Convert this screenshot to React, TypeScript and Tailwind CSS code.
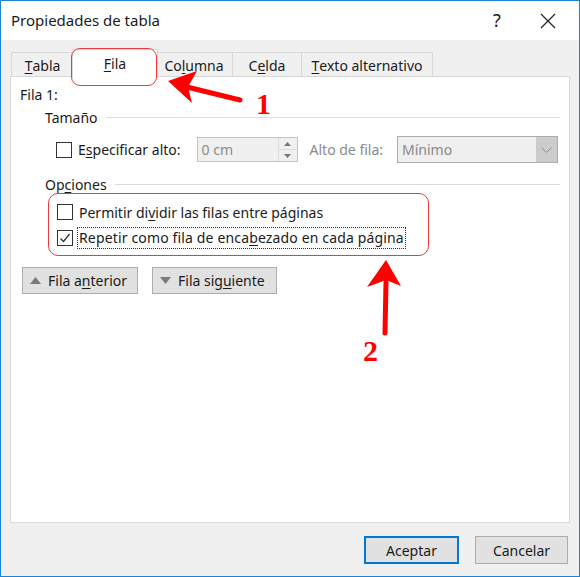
import React from 'react';

const FONT = { fontFamily: '"Noto Sans", "Open Sans", sans-serif' };

function U({ children }: { children: React.ReactNode }) {
  return <span className="underline underline-offset-2">{children}</span>;
}

function Box({ checked = false }: { checked?: boolean }) {
  return (
    <span className="w-[16px] h-[16px] border border-[#333] bg-white flex items-center justify-center shrink-0">
      {checked && (
        <svg width="12" height="12" viewBox="0 0 12 12">
          <path d="M1.5 6.5 L4.5 9.5 L10.5 2" fill="none" stroke="#333" strokeWidth="1.3" />
        </svg>
      )}
    </span>
  );
}

function Tab({ children, active = false, w }: { children: React.ReactNode; active?: boolean; w: string }) {
  return active ? (
    <div className={`${w} h-[29px] -mb-px -mx-[2px] bg-white border border-[#d9d9d9] border-b-white flex items-center justify-center relative z-10`}>
      {children}
    </div>
  ) : (
    <div className={`${w} h-[25px] bg-[#f0f0f0] border border-[#d9d9d9] -ml-px first:ml-0 flex items-center justify-center pt-[2px]`}>
      {children}
    </div>
  );
}

export default function App() {
  return (
    <div
      className="w-[580px] h-[577px] relative bg-[#f0f0f0] border border-[#1883d7] flex flex-col text-[14px] text-[#1a1a1a] overflow-hidden"
      style={FONT}
    >
      {/* Title bar */}
      <div className="h-[39px] bg-white flex items-center pl-[10px] shrink-0">
        <span className="text-[15px] flex-1">Propiedades de tabla</span>
        <span className="text-[18px] w-[30px] text-center mr-[28px]">?</span>
        <svg width="16" height="16" viewBox="0 0 16 16" className="mr-[23px]">
          <path d="M1 1 L15 15 M15 1 L1 15" stroke="#222" strokeWidth="1.2" />
        </svg>
      </div>

      {/* Tabs */}
      <div className="mt-[12px] ml-[10px] flex items-end h-[25px] relative z-10">
        <Tab w="w-[63px]"><U>T</U>abla</Tab>
        <Tab w="w-[86px]" active><U>F</U>ila</Tab>
        <Tab w="w-[78px]">Co<U>l</U>umna</Tab>
        <Tab w="w-[70px]">C<U>e</U>lda</Tab>
        <Tab w="w-[132px]"><U>T</U>exto alternativo</Tab>
      </div>

      {/* Panel */}
      <div className="mx-[9px] h-[447px] -mt-px bg-white border border-[#d9d9d9] px-[9px] pt-[8px]">
        <div className="leading-[20px]">Fila 1:</div>

        <div className="flex items-center mt-[2px] pl-[25px]">
          <span>Tamaño</span>
          <span className="flex-1 h-px bg-[#dcdcdc] ml-[8px]" />
        </div>

        <div className="flex items-center mt-[8px] pl-[36px] h-[27px]">
          <Box />
          <span className="ml-[6px]">E<U>s</U>pecificar alto:</span>
          <div className="ml-[16px] w-[101px] h-[25px] border border-[#c4c4c4] bg-[#f0f0f0] flex">
            <span className="flex-1 pl-[4px] text-[#8a8a8a] leading-[23px]">0 cm</span>
            <div className="w-[19px] flex flex-col border-l border-[#dcdcdc]">
              <span className="flex-1 flex items-center justify-center border-b border-[#dcdcdc]">
                <svg width="7" height="4" viewBox="0 0 7 4"><path d="M0 4 L3.5 0 L7 4Z" fill="#777" /></svg>
              </span>
              <span className="flex-1 flex items-center justify-center">
                <svg width="7" height="4" viewBox="0 0 7 4"><path d="M0 0 L3.5 4 L7 0Z" fill="#777" /></svg>
              </span>
            </div>
          </div>
          <span className="ml-[12px] text-[#8a8a8a]">Alto de fila:</span>
          <div className="ml-[14px] w-[161px] h-[27px] border border-[#adadad] bg-[#efefef] flex">
            <span className="flex-1 pl-[4px] text-[#8a8a8a] leading-[25px]">Mínimo</span>
            <span className="w-[21px] bg-[#cccccc] flex items-center justify-center">
              <svg width="11" height="6" viewBox="0 0 11 6"><path d="M0.5 0.5 L5.5 5.5 L10.5 0.5" fill="none" stroke="#8f8f8f" strokeWidth="1" /></svg>
            </span>
          </div>
        </div>

        <div className="flex items-center mt-[11px] pl-[25px]">
          <span>Op<U>c</U>iones</span>
          <span className="flex-1 h-px bg-[#dcdcdc] ml-[8px]" />
        </div>

        <div className="relative -mt-[2px] ml-[28px] w-[381px] h-[63px] border-[1.5px] border-[#ee3a3f] rounded-[10px] pl-[8px] pt-[8px]">
          <div className="flex items-center h-[20px]">
            <Box />
            <span className="ml-[6px]">Permitir di<U>v</U>idir las filas entre páginas</span>
          </div>
          <div className="flex items-center h-[22px] mt-[5px]">
            <Box checked />
            <span className="ml-[4px] px-[1px] border border-dotted border-[#333] leading-[20px] tracking-[0.15px]">
              Repetir como fila de enca<U>b</U>ezado en cada página
            </span>
          </div>
        </div>

        <div className="flex mt-[11px] pl-[2px] gap-[14px]">
          <div className="w-[116px] h-[27px] bg-[#e1e1e1] border border-[#adadad] flex items-center pl-[7px]">
            <svg width="11" height="7" viewBox="0 0 11 7"><path d="M0 7 L5.5 0 L11 7Z" fill="#7a7a7a" /></svg>
            <span className="ml-[7px]">Fila a<U>n</U>terior</span>
          </div>
          <div className="w-[125px] h-[27px] bg-[#e1e1e1] border border-[#adadad] flex items-center pl-[7px]">
            <svg width="11" height="7" viewBox="0 0 11 7"><path d="M0 0 L5.5 7 L11 0Z" fill="#7a7a7a" /></svg>
            <span className="ml-[7px]">Fila sig<U>u</U>iente</span>
          </div>
        </div>
      </div>

      {/* Bottom buttons */}
      <div className="flex justify-end gap-[16px] mt-[13px] pr-[11px]">
        <div className="w-[95px] h-[28px] bg-[#e1e1e1] border-2 border-[#0078d7] flex items-center justify-center">Aceptar</div>
        <div className="w-[93px] h-[28px] bg-[#e1e1e1] border border-[#adadad] flex items-center justify-center">Cancelar</div>
      </div>

      {/* Annotations */}
      <div className="absolute left-[70px] top-[47px] w-[86px] h-[38px] border-[1.5px] border-[#ee3a3f] rounded-[9px] z-20" />
      <svg className="absolute left-0 top-0 z-20 pointer-events-none" width="580" height="577" viewBox="0 0 580 577">
        <path d="M239 99 L186 86" stroke="#ff0000" strokeWidth="5" strokeLinecap="round" />
        <path d="M167 80 L196 70 L187 86 L191 102 Z" fill="#ff0000" />
        <path d="M384 332 L385 281" stroke="#ff0000" strokeWidth="5" strokeLinecap="round" />
        <path d="M385 259 L400 285 L385 279 L366 286 Z" fill="#ff0000" />
        <text x="255" y="113" fill="#ff0000" fontSize="30" fontWeight="bold" fontFamily='"Liberation Serif", serif'>1</text>
        <text x="362" y="360" fill="#ff0000" fontSize="30" fontWeight="bold" fontFamily='"Liberation Serif", serif'>2</text>
      </svg>
    </div>
  );
}
